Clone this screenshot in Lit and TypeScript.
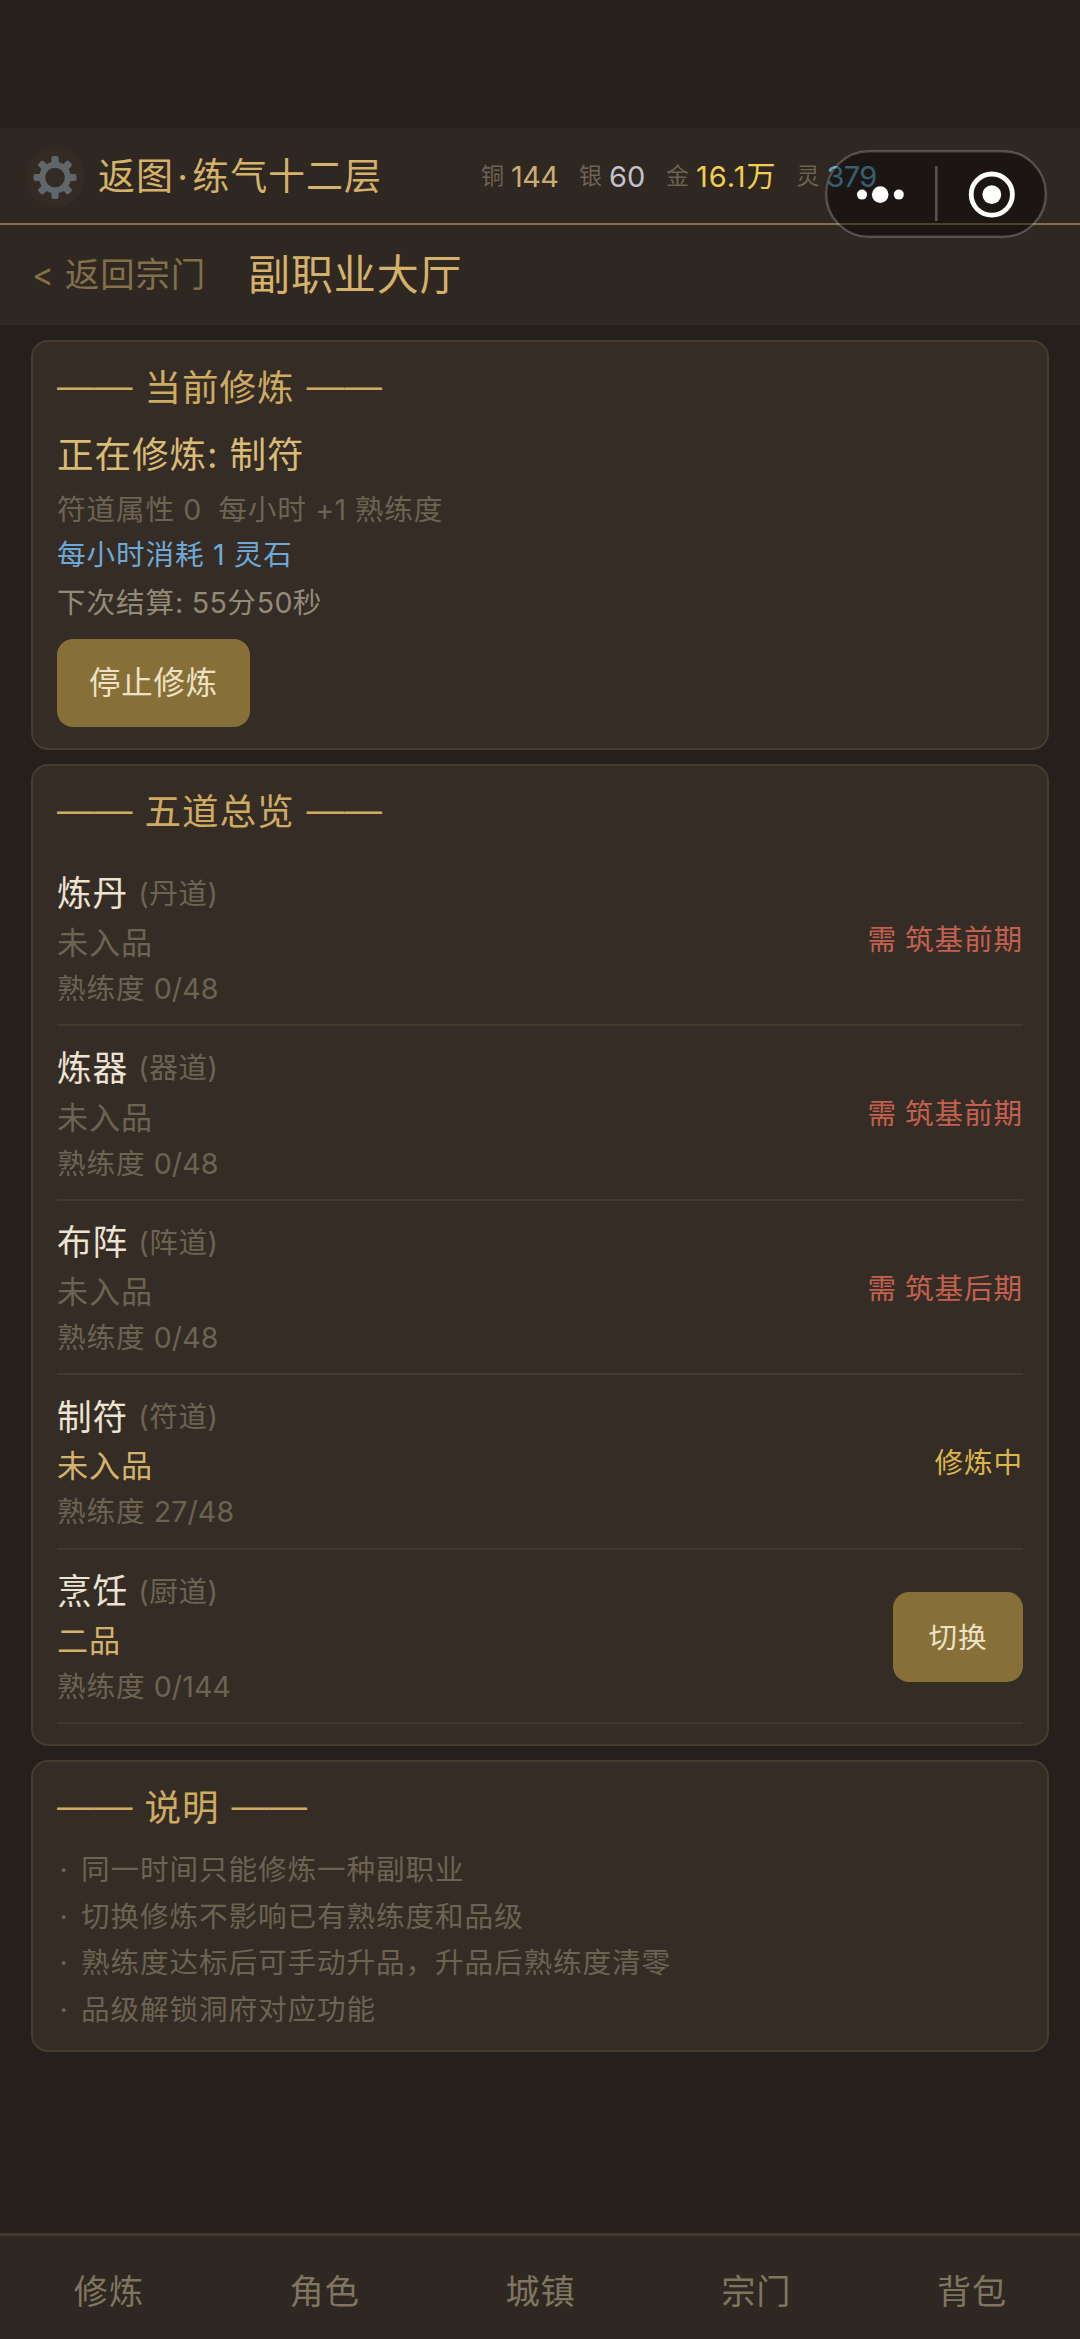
import { LitElement, html, css, svg } from "lit";
import { customElement } from "lit/decorators.js";
import { classMap } from "lit/directives/class-map.js";

interface Craft {
  name: string;
  path: string;
  rank: string;
  progress: string;
  ranked?: boolean;
  locked?: string;
  active?: boolean;
}

const CRAFTS: Craft[] = [
  { name: "炼丹", path: "丹道", rank: "未入品", progress: "0/48", locked: "筑基前期" },
  { name: "炼器", path: "器道", rank: "未入品", progress: "0/48", locked: "筑基前期" },
  { name: "布阵", path: "阵道", rank: "未入品", progress: "0/48", locked: "筑基后期" },
  { name: "制符", path: "符道", rank: "未入品", progress: "27/48", ranked: true, active: true },
  { name: "烹饪", path: "厨道", rank: "二品", progress: "0/144", ranked: true },
];

const COINS = [
  { label: "铜", value: "144", kind: "copper" },
  { label: "银", value: "60", kind: "silver" },
  { label: "金", value: "16.1万", kind: "gold" },
  { label: "灵", value: "379", kind: "spirit" },
];

const NOTES = [
  "同一时间只能修炼一种副职业",
  "切换修炼不影响已有熟练度和品级",
  "熟练度达标后可手动升品，升品后熟练度清零",
  "品级解锁洞府对应功能",
];

const TABS = ["修炼", "角色", "城镇", "宗门", "背包"];

@customElement("app-root")
export class AppRoot extends LitElement {
  static styles = css`
    :host {
      display: flex;
      flex-direction: column;
      position: relative;
      box-sizing: border-box;
      width: 1080px;
      height: 2339px;
      overflow: hidden;
      padding-top: 128px;
      background: #25201c;
      color: #6d6353;
      font-family: Inter, "Noto Sans CJK SC", sans-serif;
      font-size: 28.6px;
      line-height: 1.2;
      letter-spacing: 0.9px;
      white-space: nowrap;
    }
    * { box-sizing: border-box; }

    .top {
      display: flex;
      align-items: center;
      height: 97px;
      padding: 3px 0 0 24px;
      background: #2f2722;
      border-bottom: 2px solid #837047;
    }
    .gear { width: 61px; height: 61px; display: block; }
    .player {
      width: 383px;
      margin-left: 13px;
      font-size: 37px;
      color: #d4b26a;
    }
    .dot { display: inline-block; width: 18.5px; text-align: center; }
    .coins {
      display: grid;
      grid-template-columns: 98px 87px 130.5px 100px;
    }
    .coin { display: flex; align-items: center; }
    .coin .label { width: 30px; font-size: 23px; letter-spacing: 0; }
    .coin .value { font-size: 29px; letter-spacing: -0.6px; }
    .coin .silver { letter-spacing: 0; }
    .coin .gold { letter-spacing: 1px; }
    .copper { color: #c9ab72; }
    .silver { color: #c4c2c8; }
    .gold { color: #f2cf4e; }
    .spirit { color: #5fa3c6; }

    .capsule {
      position: absolute;
      left: 825px;
      top: 150px;
      width: 222px;
      height: 88px;
      display: block;
    }

    .sub {
      display: flex;
      align-items: center;
      height: 100px;
      padding-left: 32px;
      background: #2f2722;
    }
    .back { width: 216px; display: flex; align-items: center; font-size: 34.4px; color: #82704a; }
    .back .arrow { width: 33px; letter-spacing: 0; font-size: 33px; }
    .heading { font-size: 42px; color: #d4b26a; }

    .content {
      display: flex;
      flex-direction: column;
      gap: 14px;
      padding: 15px 31px 0;
      flex: 1;
    }
    .card {
      padding: 21px 24px 20px;
      border: 2px solid #463c2f;
      border-radius: 17px;
      background: #352c26;
    }
    .title {
      display: flex;
      gap: 12px;
      height: 50px;
      line-height: 51px;
      font-size: 36.6px;
      color: #cfab62;
    }
    .rule {
      width: 75.5px;
      font-family: "Liberation Sans", sans-serif;
      font-size: 37.75px;
      line-height: 45px;
      letter-spacing: 0;
    }
    .status {
      height: 50px;
      line-height: 51px;
      margin-top: 17px;
      font-size: 36.6px;
      color: #d8bb74;
    }
    .line { height: 44px; line-height: 45px; white-space: pre; }
    .num { letter-spacing: 0.1px; }
    .rate { margin-top: 7px; }
    .rate .num { letter-spacing: 0.3px; }
    .cost { margin-top: 1px; color: #6fa8d6; }
    .cost .num { letter-spacing: 0.5px; }
    .next { margin-top: 4px; color: #948a78; }
    .next .num { letter-spacing: 0.3px; }
    .button {
      display: flex;
      align-items: center;
      justify-content: center;
      width: 193px;
      height: 88px;
      padding-top: 2px;
      border-radius: 16px;
      background: #867038;
      color: #efe2c4;
      font-size: 31.4px;
    }
    .stop { margin: 15px 0 1px; }
    .switch { width: 130px; height: 90px; margin-top: 2px; font-size: 28.6px; }

    .rows { margin-top: 15px; }
    .row {
      display: flex;
      align-items: center;
      justify-content: space-between;
      height: 174.4px;
      border-bottom: 2px solid #43392c;
    }
    .info { padding-top: 5px; }
    .name { display: flex; align-items: center; height: 49px; padding-top: 3px; font-size: 34.7px; color: #ece3d3; }
    .path { margin-left: 10px; font-size: 28.6px; letter-spacing: 0.6px; color: #6d6353; }
    .rank { height: 47px; line-height: 52px; font-size: 31.1px; }
    .ranked { color: #d3b36b; }
    .progress { height: 49px; line-height: 50px; }
    .locked, .active { padding-top: 4px; letter-spacing: 0.9px; }
    .locked { color: #c4604f; word-spacing: -1px; }
    .active { color: #d9b64c; }

    .notes { margin-top: 13px; }
    .note { display: flex; height: 46.6px; line-height: 47.6px; }
    .bullet { width: 14px; margin-right: 10px; text-align: center; }
    .tips { height: 292px; }

    .tabs {
      display: grid;
      grid-template-columns: repeat(5, 1fr);
      align-items: center;
      height: 106px;
      padding: 8px 0 0 1px;
      border-top: 3px solid #43382e;
      background: #2f2722;
      color: #807560;
      font-size: 34.2px;
      text-align: center;
    }
  `;

  private gear() {
    const teeth = [0, 45, 90, 135, 180, 225, 270, 315];
    return html`<svg class="gear" viewBox="-31 -30.5 61 61">
      <circle r="30" fill="#342b25"></circle>
      ${teeth.map(
        (a) => svg`<rect x="-3.6" y="-21.5" width="7.2" height="10" rx="2" fill="#5f676b" transform="rotate(${a})"></rect>`,
      )}
      <circle r="12.8" fill="none" stroke="#5f676b" stroke-width="6"></circle>
    </svg>`;
  }

  private capsule() {
    return html`<svg class="capsule" viewBox="0 0 222 88">
      <rect x="1.2" y="1.2" width="219.6" height="85.6" rx="42.8" fill="#000" fill-opacity=".42"
        stroke="#fff" stroke-opacity=".22" stroke-width="2.4"></rect>
      <circle cx="37" cy="44.6" r="5" fill="#fff"></circle>
      <circle cx="55.2" cy="44.6" r="8.3" fill="#fff"></circle>
      <circle cx="73.8" cy="44.6" r="5" fill="#fff"></circle>
      <rect x="110" y="16" width="2.6" height="55" fill="#fff" fill-opacity=".26"></rect>
      <circle cx="166.8" cy="44.6" r="20.6" fill="none" stroke="#fff" stroke-width="4.8"></circle>
      <circle cx="166.8" cy="44.6" r="9.4" fill="#fff"></circle>
    </svg>`;
  }

  private title(text: string) {
    return html`<div class="title">
      <span class="rule">——</span><span>${text}</span><span class="rule">——</span>
    </div>`;
  }

  private action(c: Craft) {
    if (c.locked) return html`<div class="locked">需 ${c.locked}</div>`;
    if (c.active) return html`<div class="active">修炼中</div>`;
    return html`<div class="button switch">切换</div>`;
  }

  connectedCallback() {
    super.connectedCallback();
    this.lang = "zh-CN";
  }

  render() {
    return html`
      <div class="top">
        ${this.gear()}
        <div class="player">返图<span class="dot">·</span>练气十二层</div>
        <div class="coins">
          ${COINS.map(
            (c) => html`<div class="coin"><span class="label">${c.label}</span><span class="value ${c.kind}">${c.value}</span></div>`,
          )}
        </div>
      </div>
      <div class="sub">
        <div class="back"><span class="arrow">&lt;</span><span>返回宗门</span></div>
        <div class="heading">副职业大厅</div>
      </div>
      <div class="content">
        <div class="card">
          ${this.title("当前修炼")}
          <div class="status">正在修炼: 制符</div>
          <div class="line rate">符道属性<span class="num"> 0  </span>每小时<span class="num"> +1 </span>熟练度</div>
          <div class="line cost">每小时消耗<span class="num"> 1 </span>灵石</div>
          <div class="line next">下次结算<span class="num">: 55</span>分<span class="num">50</span>秒</div>
          <div class="button stop">停止修炼</div>
        </div>
        <div class="card">
          ${this.title("五道总览")}
          <div class="rows">
            ${CRAFTS.map(
              (c) => html`<div class="row">
                <div class="info">
                  <div class="name">${c.name}<span class="path">(${c.path})</span></div>
                  <div class=${classMap({ rank: true, ranked: !!c.ranked })}>${c.rank}</div>
                  <div class="progress">熟练度<span class="num"> ${c.progress}</span></div>
                </div>
                ${this.action(c)}
              </div>`,
            )}
          </div>
        </div>
        <div class="card tips">
          ${this.title("说明")}
          <div class="notes">
            ${NOTES.map((n) => html`<div class="note"><span class="bullet">·</span><span>${n}</span></div>`)}
          </div>
        </div>
      </div>
      <div class="tabs">${TABS.map((t) => html`<div>${t}</div>`)}</div>
      ${this.capsule()}
    `;
  }
}
